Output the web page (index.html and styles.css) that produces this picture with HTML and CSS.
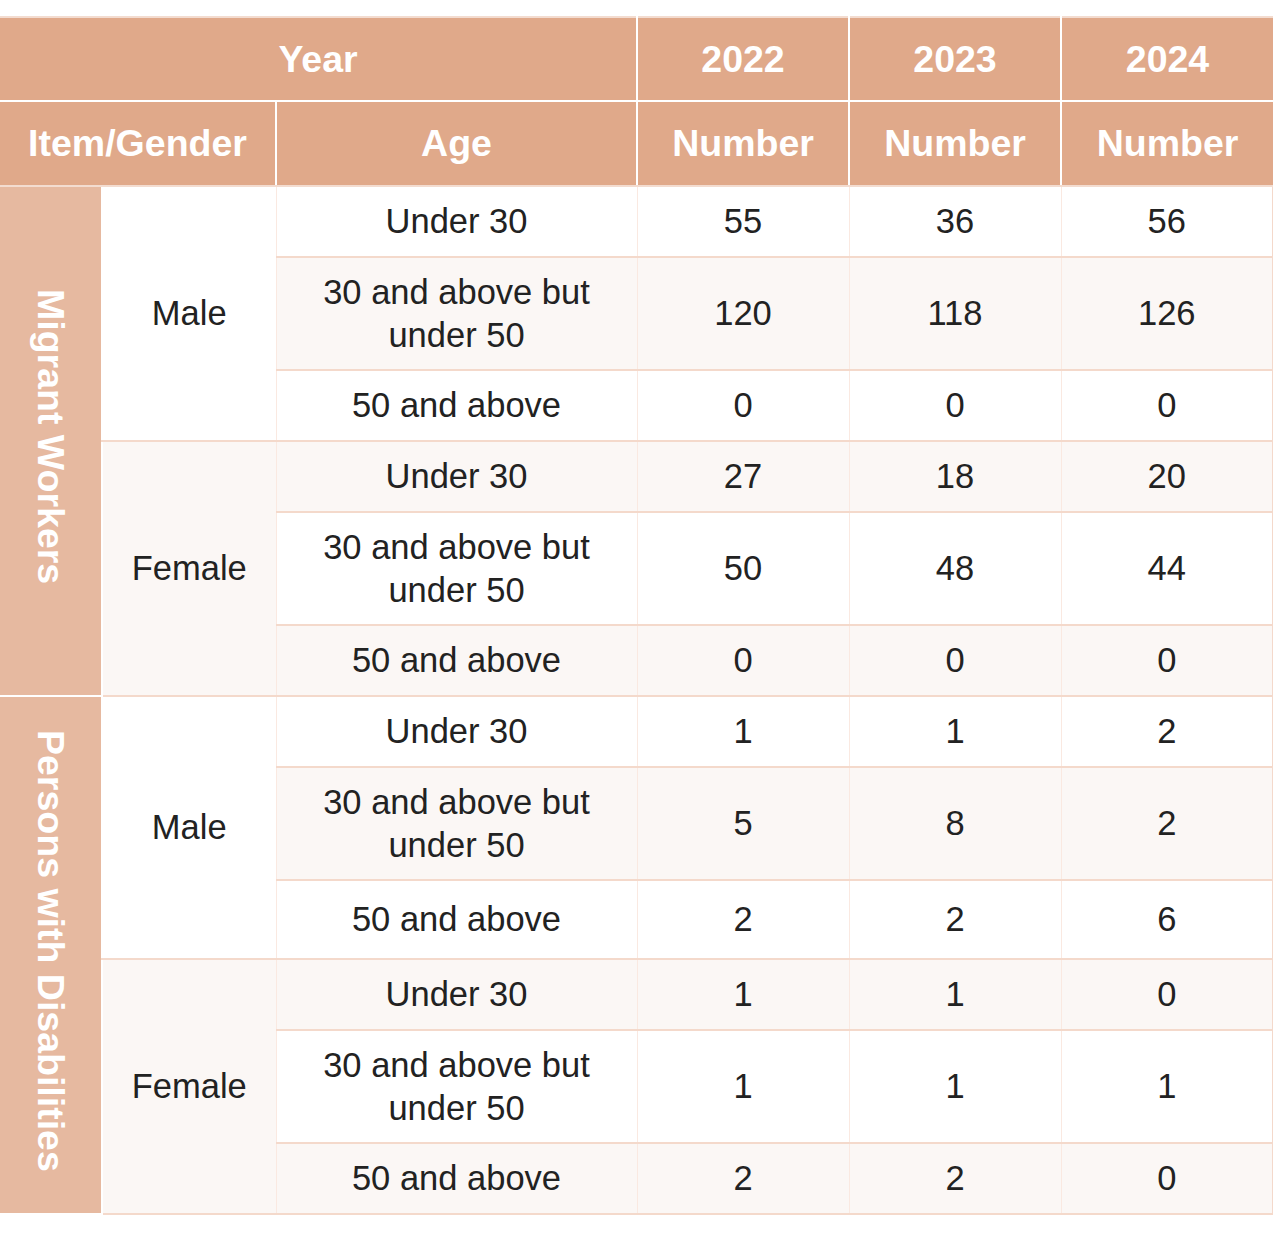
FILE: index.html
```html
<!DOCTYPE html>
<html lang="en">
<head>
<meta charset="utf-8">
<title>Migrant Workers and Persons with Disabilities</title>
<link rel="stylesheet" href="styles.css">
</head>
<body>
<table class="stats">
  <colgroup>
    <col class="c-cat">
    <col class="c-gender">
    <col class="c-age">
    <col class="c-num">
    <col class="c-num">
    <col class="c-num">
  </colgroup>
  <thead>
    <tr class="h1">
      <th colspan="3">Year</th>
      <th>2022</th>
      <th>2023</th>
      <th>2024</th>
    </tr>
    <tr class="h2">
      <th colspan="2">Item/Gender</th>
      <th>Age</th>
      <th>Number</th>
      <th>Number</th>
      <th>Number</th>
    </tr>
  </thead>
  <tbody>
    <tr class="r-s">
      <th class="cat" rowspan="6"><span>Migrant Workers</span></th>
      <td class="gender" rowspan="3">Male</td>
      <td>Under 30</td><td>55</td><td>36</td><td>56</td>
    </tr>
    <tr class="r-l alt">
      <td>30 and above but<br>under 50</td><td>120</td><td>118</td><td>126</td>
    </tr>
    <tr class="r-s">
      <td>50 and above</td><td>0</td><td>0</td><td>0</td>
    </tr>
    <tr class="r-s alt">
      <td class="gender g-alt" rowspan="3">Female</td>
      <td>Under 30</td><td>27</td><td>18</td><td>20</td>
    </tr>
    <tr class="r-l">
      <td>30 and above but<br>under 50</td><td>50</td><td>48</td><td>44</td>
    </tr>
    <tr class="r-s alt">
      <td>50 and above</td><td>0</td><td>0</td><td>0</td>
    </tr>
    <tr class="r-s">
      <th class="cat" rowspan="6"><span>Persons with Disabilities</span></th>
      <td class="gender" rowspan="3">Male</td>
      <td>Under 30</td><td>1</td><td>1</td><td>2</td>
    </tr>
    <tr class="r-l alt">
      <td>30 and above but<br>under 50</td><td>5</td><td>8</td><td>2</td>
    </tr>
    <tr class="r-m">
      <td>50 and above</td><td>2</td><td>2</td><td>6</td>
    </tr>
    <tr class="r-s alt">
      <td class="gender g-alt" rowspan="3">Female</td>
      <td>Under 30</td><td>1</td><td>1</td><td>0</td>
    </tr>
    <tr class="r-l">
      <td>30 and above but<br>under 50</td><td>1</td><td>1</td><td>1</td>
    </tr>
    <tr class="r-s alt">
      <td>50 and above</td><td>2</td><td>2</td><td>0</td>
    </tr>
  </tbody>
</table>
</body>
</html>
```
FILE: styles.css
```css
html, body {
  margin: 0;
  padding: 0;
  background: #ffffff;
}

body {
  padding-top: 16px;
  font-family: "Liberation Sans", Arial, sans-serif;
  color: #222222;
}

.stats {
  width: 1273px;
  border-collapse: collapse;
  table-layout: fixed;
}

.c-cat { width: 102px; }
.c-gender { width: 174px; }
.c-age { width: 361px; }
.c-num { width: 212px; }

.stats th,
.stats td {
  padding: 0;
  text-align: center;
  vertical-align: middle;
}

thead th {
  background: #e0a98a;
  color: #ffffff;
  font-size: 37.5px;
  font-weight: bold;
  border: 2px solid #ffffff;
  border-top-color: #f3dcd0;
}

thead th:first-child {
  border-left: none;
}

thead th:last-child {
  border-right: none;
}

.h1 th { height: 82px; }
.h2 th { height: 83px; border-bottom-color: #f3dcd0; }

tbody td {
  font-size: 34.5px;
  line-height: 43px;
  background: #ffffff;
  border-top: 2px solid #f4d9cb;
  border-bottom: 2px solid #f4d9cb;
  border-left: 1px solid #fae9e1;
  border-right: 1px solid #fae9e1;
}

tbody td:last-child {
  border-right: 2px solid #f4d9cb;
}

tbody tr.alt td {
  background: #fbf7f5;
}

tbody tr.alt td.gender {
  background: #ffffff;
}

tbody td.gender.g-alt,
tbody tr.alt td.gender.g-alt {
  background: #fbf7f5;
}

tbody td.gender {
  border-left: 2px solid #ffffff;
}

.r-s td { height: 69px; }
.r-m td { height: 77px; }
.r-l td { height: 111px; }

.cat {
  background: #e6b9a0;
  color: #ffffff;
  font-size: 37.5px;
  font-weight: bold;
  border-top: 2px solid #ffffff;
  border-bottom: 2px solid #ffffff;
}

.cat span {
  display: inline-block;
  writing-mode: vertical-rl;
  line-height: 1;
}
```
